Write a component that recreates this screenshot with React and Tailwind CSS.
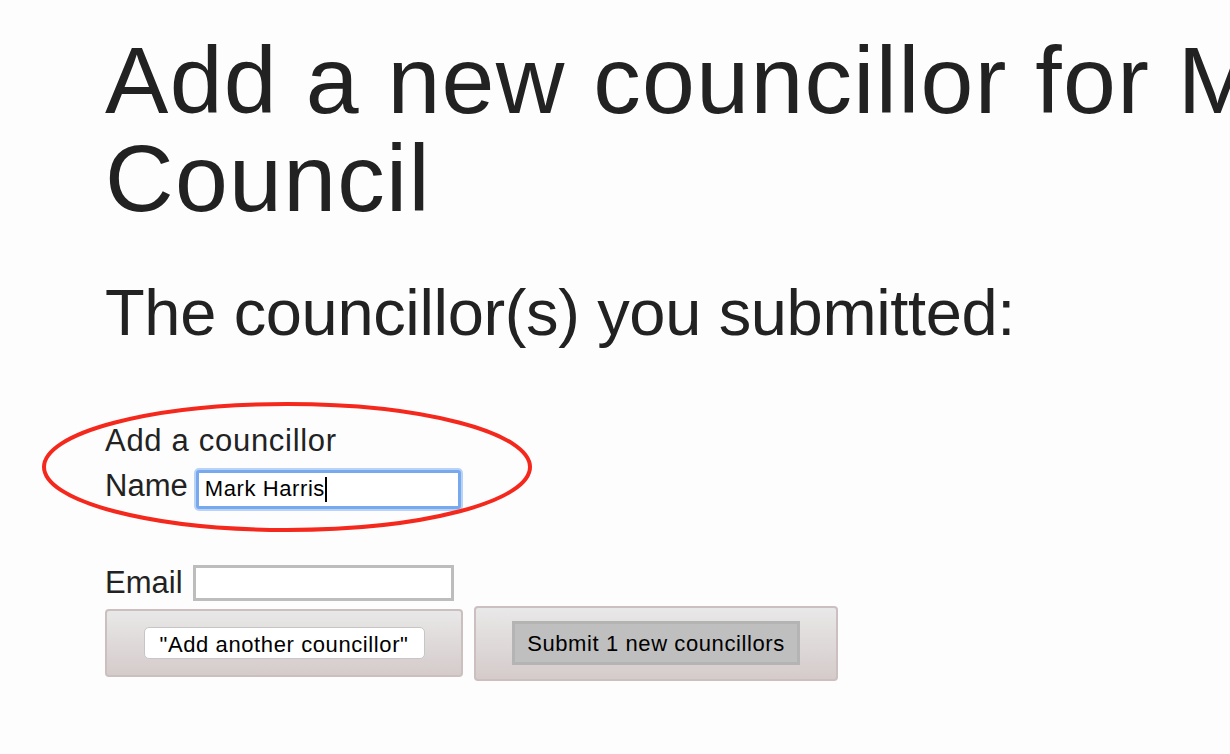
import React from 'react';

const font = { fontFamily: '"Liberation Sans", Arial, sans-serif' };

export default function App() {
    return (
        <div style={font} className="relative min-h-[754px] w-[1230px] overflow-hidden bg-[#fdfdfd] text-[#222222] pl-[105px] pt-[31px]">
            {/* page heading, runs off the right edge */}
            <h1 className="text-[95px] leading-[98px] font-normal whitespace-nowrap tracking-[1.3px]">
                <span className="block">Add a new councillor for Melbourne City</span>
                <span className="block">Council</span>
            </h1>

            <h2 className="mt-[50px] text-[65px] leading-[72px] font-normal whitespace-nowrap tracking-[-0.35px]">
                The councillor(s) you submitted:
            </h2>

            <form className="mt-[74px]">
                <p className="text-[31px] leading-[36px] tracking-[0.7px]">Add a councillor</p>

                <div className="mt-[9px] flex items-baseline gap-[7px] text-[31px] leading-[36px]">
                    <label>Name</label>
                    <div className="ml-[1px] flex h-[39px] w-[265px] items-center rounded-[3px] border-[3px] border-[#78a9ee] bg-white pl-[6px] text-[22px] tracking-[0.6px] text-black shadow-[0_0_0_2px_#b9d3f7]">
                        <span>Mark Harris</span>
                        <span className="h-[25px] w-[2px] bg-black" />
                    </div>
                </div>

                <div className="mt-[56px] flex items-baseline gap-[10px] text-[31px] leading-[36px]">
                    <label>Email</label>
                    <input type="email" className="h-[36px] w-[261px] border-[3px] border-[#bdbdbd] bg-white outline-none" />
                </div>

                <div className="mt-[5px] flex items-center gap-[11px] text-[22px] tracking-[0.6px] text-black">
                    <div className="flex h-[68px] w-[358px] items-center justify-center rounded-[4px] border-2 border-[#cbbfbf] bg-gradient-to-b from-[#e9e8e8] to-[#d5cbcb]">
                        <button type="button" className="h-[32px] w-[281px] rounded-[5px] border border-[#c6c6c6] bg-white">
                            "Add another councillor"
                        </button>
                    </div>
                    <div className="flex h-[75px] w-[364px] items-center justify-center rounded-[4px] border-2 border-[#cbbfbf] bg-gradient-to-b from-[#e9e8e8] to-[#d5cbcb]">
                        <button type="submit" className="h-[44px] w-[288px] border-[3px] border-[#b4b4b4] bg-[#bfbfbf]">
                            Submit 1 new councillors
                        </button>
                    </div>
                </div>
            </form>

            {/* red annotation ellipse drawn over the form */}
            <svg className="pointer-events-none absolute left-0 top-0" width="1230" height="754">
                <ellipse cx="287" cy="467" rx="243" ry="63" fill="none" stroke="#f4281c" strokeWidth="4" />
            </svg>
        </div>
    );
}
